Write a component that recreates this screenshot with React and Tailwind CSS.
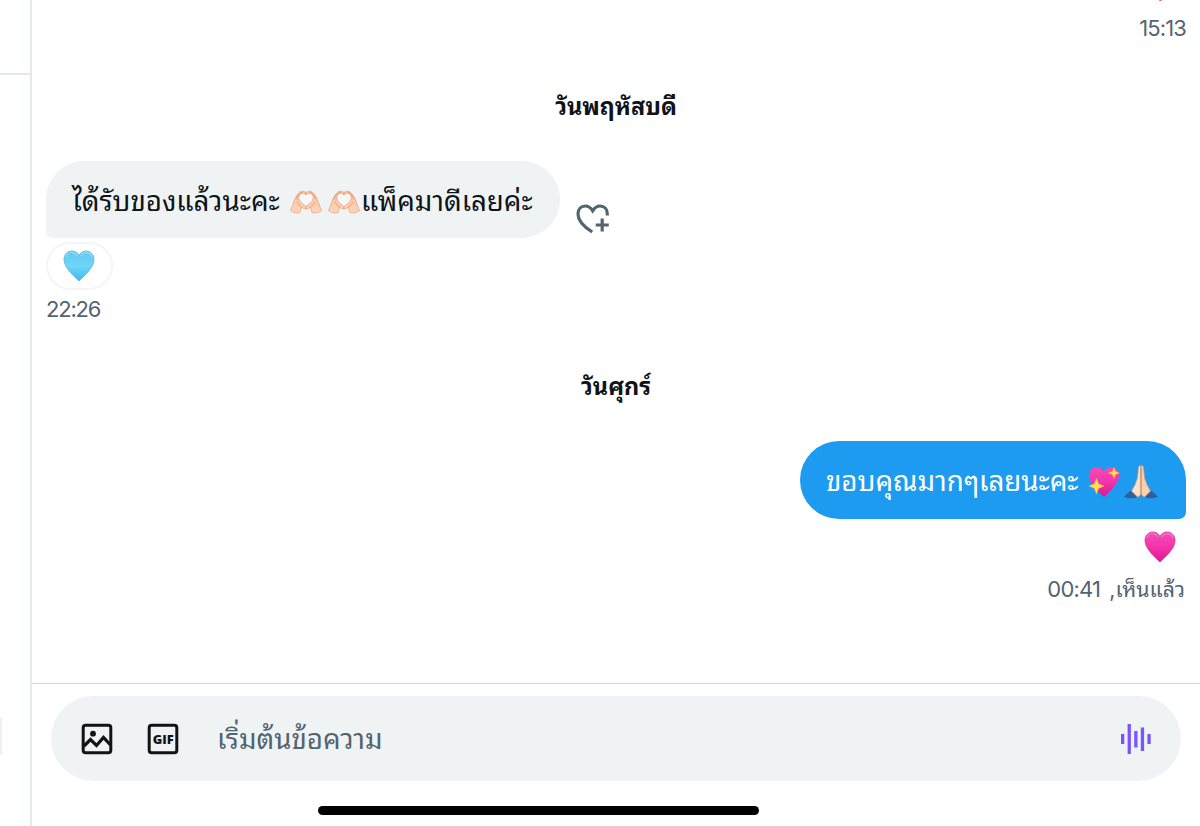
import React from 'react';

const Hand = () => (
  <>
    <path
      d="M.5 20.500 C2.800 16 3.800 10 6.800 5.500 C8.500 2.800 10.500 1.200 12.800 1.200 C14.500 1.200 16 2 16 4.800 C12.800 1.800 8.800 3.600 8.800 7.500 C8.800 11.500 12.500 14 16 16.500 V19 C13.800 18.800 12.600 17.700 11.600 17.200 C11 19.500 10.500 21.300 9.600 22.800 C6.500 23.300 3 22.500 .5 20.500 Z"
      fill="url(#skin)" stroke="#ec9a72" strokeWidth=".7" strokeLinejoin="round"
    />
    <path d="M6.300 9.500 C7 6 9 3.300 12.500 2.300 M7 12 C8 14 9.500 16 11.600 17.200" fill="none" stroke="#ec8f66" strokeWidth=".8" />
  </>
);

// Hands that form a heart
const HeartHands = () => (
  <svg viewBox="0 0 32 24" className="mt-[4px] h-6 w-8 shrink-0">
    <defs>
      <linearGradient id="skin" x1="0" y1="0" x2="0" y2="1">
        <stop offset="0" stopColor="#f9c4a6" />
        <stop offset="1" stopColor="#fdd5b8" />
      </linearGradient>
    </defs>
    <path d="M16 4.800 C12.800 1.800 8.800 3.600 8.800 7.500 C8.800 11.500 12.500 14 16 16.500 C19.500 14 23.200 11.500 23.200 7.500 C23.200 3.600 19.200 1.800 16 4.800 Z" fill="#f5f7f8" />
    <Hand />
    <g transform="matrix(-1 0 0 1 32 0)">
      <Hand />
    </g>
  </svg>
);

const HEART_PATH = 'M16 31 C12 27 1 18 1 9.500 C1 4.500 4.500 1 8.800 1 C12 1 14.700 2.800 16 5.500 C17.300 2.800 20 1 23.200 1 C27.500 1 31 4.500 31 9.500 C31 18 20 27 16 31 Z';

const BlueHeart = () => (
  <svg viewBox="0 0 32 32" className="mr-[2px] h-8 w-8">
    <defs>
      <linearGradient id="blue" x1="0" y1="0" x2="0" y2="1">
        <stop offset="0" stopColor="#62c7ec" />
        <stop offset=".5" stopColor="#6fd6fa" />
        <stop offset="1" stopColor="#3db9ec" />
      </linearGradient>
    </defs>
    <path d={HEART_PATH} fill="url(#blue)" stroke="#55b8da" strokeWidth=".8" />
    <path d="M3 7 C4 3.500 7 2 9.500 2.500 C12 3 13 4 14 6 M18 6 C19 3.500 21 2.500 23.500 2.500 C26 2.500 28 4 29 7" fill="none" stroke="#a7e3f6" strokeWidth="1.300" opacity=".7" />
  </svg>
);

const PinkHeart = () => (
  <svg viewBox="0 0 32 32" className="h-8 w-8">
    <defs>
      <linearGradient id="pink" x1="0" y1="0" x2="0" y2="1">
        <stop offset="0" stopColor="#ee4fb4" />
        <stop offset=".45" stopColor="#f636ac" />
        <stop offset="1" stopColor="#df1591" />
      </linearGradient>
    </defs>
    <path d={HEART_PATH} fill="url(#pink)" stroke="#dc2c98" strokeWidth=".8" />
    <path d="M3 7 C4 3.500 7 2 9.500 2.500 C12 3 13 4 14 6 M18 6 C19 3.500 21 2.500 23.500 2.500 C26 2.500 28 4 29 7" fill="none" stroke="#f78fd0" strokeWidth="1.300" opacity=".7" />
  </svg>
);

const SparklingHeart = () => (
  <svg viewBox="0 0 32 32" className="mt-[3px] h-8 w-8 shrink-0">
    <path d={HEART_PATH} fill="url(#pink)" />
    <path d="M8.500 12.500 L10.700 17.900 L15.800 20.100 L10.700 22.300 L8.500 27.800 L6.300 22.300 L1 20.100 L6.300 17.900 Z" fill="#ffdf55" stroke="#f9b73e" strokeWidth=".6" />
    <path d="M26 1.800 L27.500 5.400 L31.200 7 L27.500 8.500 L26 12.300 L24.500 8.500 L20.700 7 L24.500 5.400 Z" fill="#ffdf55" stroke="#f9b73e" strokeWidth=".6" />
  </svg>
);

const FoldedHands = () => (
  <svg viewBox="0 0 34 34" className="mt-[4px] h-[34px] w-[34px] shrink-0">
    <path d="M0 32 C2 29.500 5 27 8.500 24 L15 31.500 C12 33.500 5 34 0 32 Z M34 32 C32 29.500 29 27 25.500 24 L19 31.500 C22 33.500 29 34 34 32 Z" fill="#315f9c" />
    <path d="M16.900 1 C15.400 .5 14.600 1.500 14.500 3 L13.500 13 L11 20 L7.500 26 L13.500 32 C15.500 31 17 29.500 17 27 Z" fill="#fde0c5" stroke="#d9a27d" strokeWidth=".7" />
    <path d="M17.100 1 C18.600 .5 19.400 1.500 19.500 3 L20.500 13 L23 20 L26.500 26 L20.500 32 C18.500 31 17 29.500 17 27 Z" fill="#fad2b0" stroke="#d9a27d" strokeWidth=".7" />
    <path d="M17 2 V29" stroke="#b98160" strokeWidth=".8" />
  </svg>
);

const HeartPlusIcon = () => (
  <svg viewBox="0 0 34 30" className="h-[30px] w-[34px]" fill="none" stroke="#536471" strokeWidth="3.200">
    <path d="M16.200 28 C7.500 22.500 2 16.500 2 10 C2 5 5.200 2 9.300 2 C12.600 2 14.900 4 16.700 6.800 C18.500 4 20.800 2 24.100 2 C28.200 2 31.300 5 31.300 10 V11.600" />
    <path d="M26.200 14.500 V27.600 M19.700 21 H32.800" />
  </svg>
);

const PhotoIcon = () => (
  <svg viewBox="0 0 32 32" className="h-8 w-8" fill="none" stroke="#0f1419" strokeWidth="3">
    <rect x="2.200" y="2.200" width="27.600" height="27.600" rx="2.500" />
    <path d="M3 23 L9.500 16.500 L15.500 22.500 L22.500 14.500 L29.500 22" strokeWidth="3.200" />
    <circle cx="12" cy="10.700" r="2.900" fill="#0f1419" stroke="none" />
  </svg>
);

const GifIcon = () => (
  <svg viewBox="0 0 32 32" className="h-8 w-8">
    <rect x="2.200" y="2.200" width="27.600" height="27.600" rx="2.500" fill="none" stroke="#0f1419" strokeWidth="3" />
    <text x="16.200" y="20.600" textAnchor="middle" textLength="21" lengthAdjust="spacingAndGlyphs" fill="#0f1419" className="font-['Open_Sans',sans-serif] text-[13px] font-extrabold">GIF</text>
  </svg>
);

const VoiceIcon = () => (
  <svg viewBox="0 0 30 30" className="h-[30px] w-[30px]" fill="#7856ff">
    <rect x="0" y="10" width="3.300" height="10" />
    <rect x="6.600" y="0" width="3.300" height="30" />
    <rect x="13.200" y="7" width="3.300" height="16.500" />
    <rect x="19.800" y="3.500" width="3.300" height="23.500" />
    <rect x="26.400" y="10" width="3.300" height="10" />
  </svg>
);

const DayLabel = ({ children, className }) => (
  <div className={`text-center text-[23.5px] font-bold leading-[30px] whitespace-nowrap ${className}`}>{children}</div>
);

const App = () => (
  <div className="flex h-[826px] w-[1200px] overflow-hidden bg-white font-['Inter','Noto_Sans_Thai_Looped','Loma','Noto_Sans_Thai','Noto_Sans',sans-serif] text-[#0f1419]">
    <aside className="flex w-8 shrink-0 flex-col border-r-2 border-[#e3e8eb]">
      <div className="h-[75px] shrink-0 border-b-2 border-[#e3e8eb]" />
      <div className="mt-[642px] h-[38px] w-[3px] rounded-r-full bg-gradient-to-r from-[#e9e9e9] to-white" />
    </aside>

    <main className="flex min-w-0 flex-1 flex-col">
      <section className="flex h-[683px] shrink-0 flex-col pl-[14px] pr-[14px]">
        <div className="flex h-[92px] flex-col items-end">
          <span className="mr-[24px] h-px w-[3px] rounded-b-full bg-[#e5687d]" />
          <time className="mt-[13px] text-[22px] leading-[28px] tracking-[-0.9px] text-[#536471]">15:13</time>
        </div>

        <DayLabel className="mb-[39px]">วันพฤหัสบดี</DayLabel>

        <div className="flex">
          <div className="flex h-[77px] w-[514px] items-center rounded-[38px] rounded-bl-[7px] bg-[#eff3f4] pl-[26px] text-[27.7px] whitespace-nowrap">
            <span className="mt-[4px] w-[218px]">ได้รับของแล้วนะคะ</span>
            <HeartHands />
            <span className="w-[6px]" />
            <HeartHands />
            <span className="mt-[4px] ml-px">แพ็คมาดีเลยค่ะ</span>
          </div>
          <button className="mt-[43px] ml-[16px] h-[30px]"><HeartPlusIcon /></button>
        </div>
        <div className="mt-1 flex h-12 w-[67px] items-center justify-center rounded-full border-2 border-[#f3f5f6]">
          <BlueHeart />
        </div>
        <time className="mt-[5px] text-[22px] leading-[28px] tracking-[-1.2px] text-[#536471]">22:26</time>

        <DayLabel className="mt-[49px] mb-[39px]">วันศุกร์</DayLabel>

        <div className="flex h-[78px] w-[386px] shrink-0 items-center self-end rounded-[39px] rounded-br-[7px] bg-[#1d9bf0] pl-[26px] text-[27.7px] whitespace-nowrap text-white">
          <span className="mt-[4px] w-[262px]">ขอบคุณมากๆเลยนะคะ</span>
          <SparklingHeart />
          <span className="w-[4px]" />
          <FoldedHands />
        </div>
        <div className="mt-3 mr-[10px] self-end"><PinkHeart /></div>
        <div className="mt-[12px] mr-px flex self-end text-[21.3px] leading-[28px] text-[#536471] whitespace-nowrap">
          <time className="w-[62px] text-[22px] tracking-[-0.8px]">00:41</time>
          <span>,เห็นแล้ว</span>
        </div>
      </section>

      <footer className="flex flex-1 flex-col border-t border-[#cfd9de] pt-3 pl-[19px] pr-[19px]">
        <div className="flex h-[85px] shrink-0 items-center rounded-full bg-[#eff3f4] pr-[30px] pl-[30px]">
          <PhotoIcon />
          <span className="w-[34px]" />
          <GifIcon />
          <span className="mt-[2px] ml-[38px] flex-1 text-[27.7px] whitespace-nowrap text-[#536471]">เริ่มต้นข้อความ</span>
          <VoiceIcon />
        </div>
        <div className="mt-[25px] ml-[267px] h-[9px] w-[441px] shrink-0 rounded-full bg-black" />
      </footer>
    </main>
  </div>
);

export default App;
